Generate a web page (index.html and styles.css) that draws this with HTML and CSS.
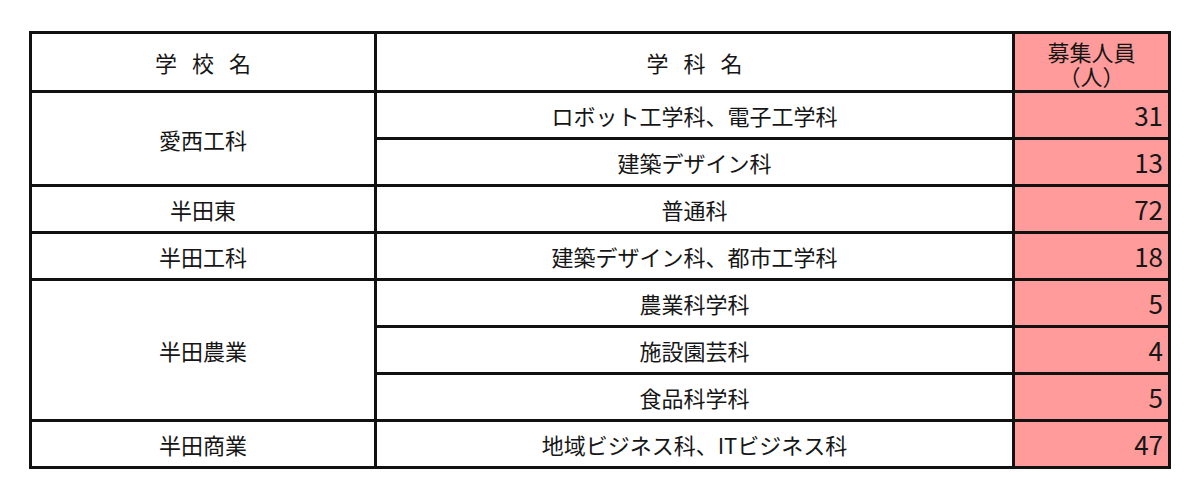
FILE: index.html
```html
<!DOCTYPE html>
<html lang="ja">
<head>
<meta charset="utf-8">
<link rel="stylesheet" href="styles.css">
</head>
<body>
<table class="boshu">
  <colgroup>
    <col class="c-school">
    <col class="c-dept">
    <col class="c-num">
  </colgroup>
  <thead>
    <tr class="head">
      <th class="spaced">学 校 名</th>
      <th class="spaced">学 科 名</th>
      <th class="num-head"><span class="hl">募集人員</span><span class="hl">（人）</span></th>
    </tr>
  </thead>
  <tbody>
    <tr><td rowspan="2">愛西工科</td><td>ロボット工学科、電子工学科</td><td class="num">31</td></tr>
    <tr><td>建築デザイン科</td><td class="num">13</td></tr>
    <tr><td>半田東</td><td>普通科</td><td class="num">72</td></tr>
    <tr><td>半田工科</td><td>建築デザイン科、都市工学科</td><td class="num">18</td></tr>
    <tr><td rowspan="3">半田農業</td><td>農業科学科</td><td class="num">5</td></tr>
    <tr><td>施設園芸科</td><td class="num">4</td></tr>
    <tr><td>食品科学科</td><td class="num">5</td></tr>
    <tr><td>半田商業</td><td>地域ビジネス科、ITビジネス科</td><td class="num">47</td></tr>
  </tbody>
</table>
</body>
</html>
```
FILE: styles.css
```css
html, body {
  margin: 0;
  padding: 0;
  background: #ffffff;
}

body {
  padding: 31px 0 0 29px;
  font-family: "Noto Sans CJK JP", "Noto Sans", sans-serif;
  color: #161616;
}

.boshu {
  border-collapse: collapse;
  table-layout: fixed;
  width: 1142px;
  border: 3px solid #111;
}

.c-school { width: 345px; }
.c-dept { width: 638px; }
.c-num { width: 156px; }

.boshu th,
.boshu td {
  border: 3px solid #111;
  padding: 0;
  font-size: 22px;
  font-weight: 400;
  text-align: center;
  vertical-align: middle;
  line-height: 1;
}

.boshu tr.head th {
  height: 55px;
}

.boshu tbody td {
  height: 44px;
}

.spaced {
  letter-spacing: 5px;
  text-indent: 5px;
}

.boshu th.num-head {
  background: #ff9b9b;
  font-size: 22px;
  line-height: 24px;
  padding-top: 1px;
}

.hl {
  display: block;
}

.boshu td.num {
  background: #ff9b9b;
  text-align: right;
  padding-right: 5px;
  font-size: 26px;
}
```
